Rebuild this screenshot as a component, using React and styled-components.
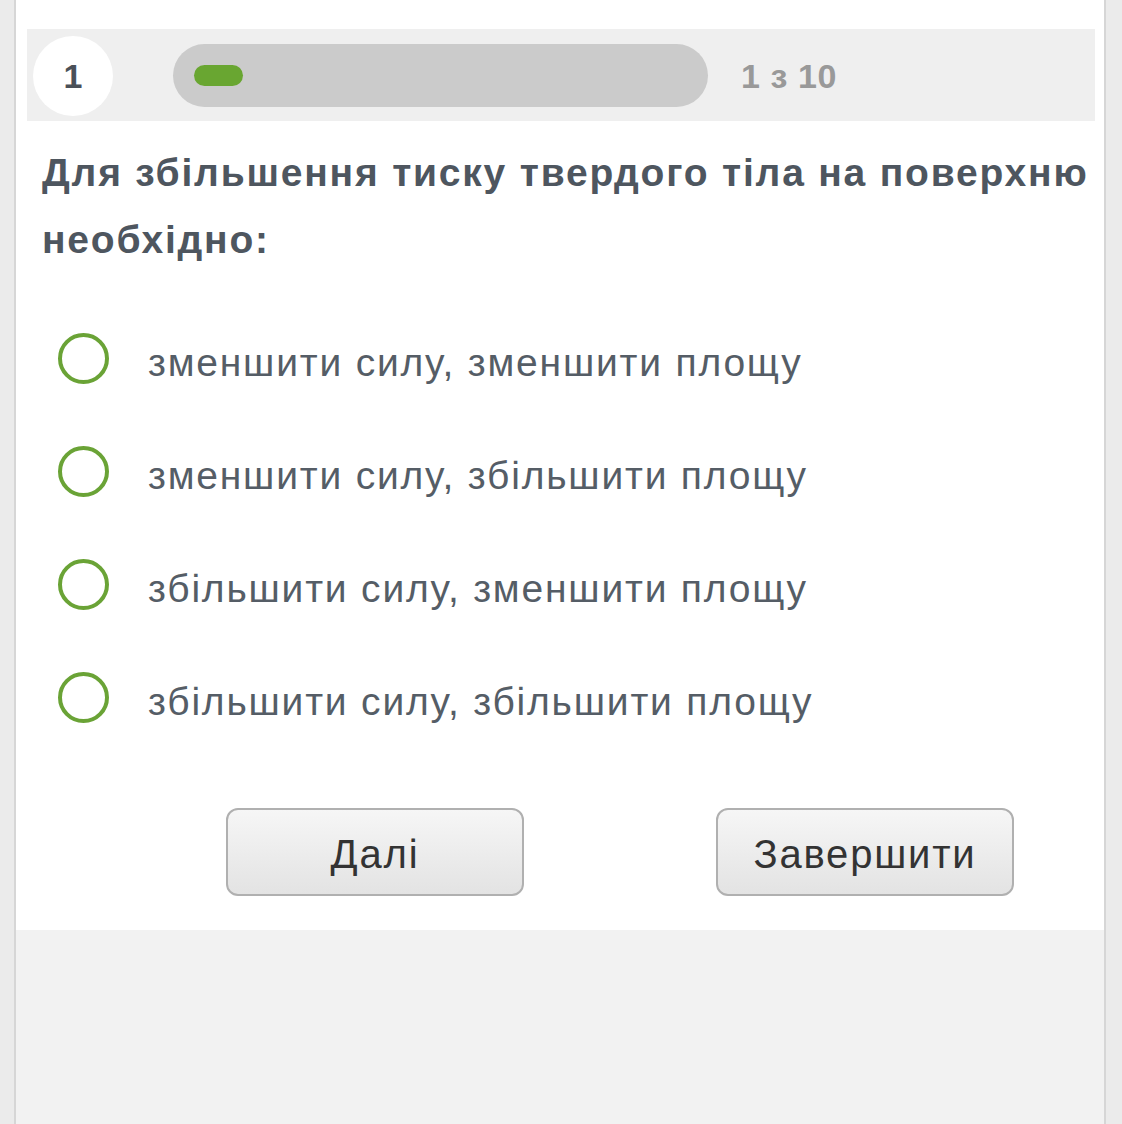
import React from 'react';
import styled, { createGlobalStyle } from 'styled-components';

const GlobalStyle = createGlobalStyle`
    html, body {
        margin: 0;
        padding: 0;
        background: #ececec;
    }
    * {
        box-sizing: border-box;
    }
`;

const Page = styled.div`
    display: flex;
    min-height: 1124px;
    font-family: "Liberation Sans", Arial, sans-serif;
`;
const Rail = styled.div`
    flex: 0 0 ${(p) => p.$width}px;
    background: #ebebeb;
    ${(p) => (p.$side === 'left' ? 'border-right' : 'border-left')}: 2px solid #d6d6d6;
`;
const Main = styled.main`
    flex: 1;
    display: flex;
    flex-direction: column;
    background: #f2f2f2;
`;
const Card = styled.section`
    background: #fff;
    padding: 29px 0 34px;
`;
const HeaderBar = styled.div`
    display: flex;
    align-items: center;
    height: 92px;
    margin: 0 9px 0 11px;
    padding: 0 6px;
    background: #efefef;
`;
const Number = styled.div`
    width: 80px;
    height: 80px;
    border-radius: 50%;
    background: #fff;
    display: flex;
    align-items: center;
    justify-content: center;
    font-size: 34px;
    font-weight: 700;
    color: #4a5058;
    margin-top: 2px;
`;
const Track = styled.div`
    width: 535px;
    height: 63px;
    margin-left: 60px;
    border-radius: 32px;
    background: #cbcbcb;
    display: flex;
    align-items: center;
    padding-left: 21px;
`;
const Fill = styled.div`
    width: 49px;
    height: 21px;
    border-radius: 11px;
    background: #69a631;
`;
const Counter = styled.div`
    margin: 3px 0 0 33px;
    font-size: 34px;
    font-weight: 700;
    letter-spacing: 0.6px;
    color: #999;
`;
const Question = styled.h2`
    margin: 18px 4px 0 26px;
    font-size: 39px;
    line-height: 67px;
    letter-spacing: 1.8px;
    font-weight: 700;
    color: #4e565f;
`;
const Options = styled.ul`
    list-style: none;
    margin: 29px 0 0;
    padding: 0 0 0 42px;
`;
const Option = styled.li`
    display: flex;
    align-items: center;
    height: 113px;
`;
const Radio = styled.span`
    width: 51px;
    height: 51px;
    border-radius: 50%;
    border: 4px solid #6aa336;
    flex-shrink: 0;
`;
const OptionText = styled.span`
    margin-left: 39px;
    padding-top: 8px;
    font-size: 39px;
    letter-spacing: 1.8px;
    color: #555d66;
`;
const Buttons = styled.div`
    display: flex;
    gap: 192px;
    margin-top: 54px;
    padding-left: 210px;
`;
const Button = styled.button`
    width: 298px;
    height: 88px;
    border: 2px solid #b0b0b0;
    border-radius: 12px;
    background: linear-gradient(#f6f6f6, #e3e3e3);
    font-family: inherit;
    font-size: 40px;
    letter-spacing: 1.8px;
    color: #333;
    padding: 4px 0 0;
`;
const Footer = styled.div`
    flex: 1;
    background: #f2f2f2;
`;

const answers = [
    'зменшити силу, зменшити площу',
    'зменшити силу, збільшити площу',
    'збільшити силу, зменшити площу',
    'збільшити силу, збільшити площу',
];

const App = () => {
    return (
        <Page>
            <GlobalStyle />
            <Rail $width={16} $side="left" />
            <Main>
                <Card>
                    <HeaderBar>
                        <Number>1</Number>
                        <Track>
                            <Fill />
                        </Track>
                        <Counter>1 з 10</Counter>
                    </HeaderBar>
                    <Question>
                        Для збільшення тиску твердого тіла на поверхню необхідно:
                    </Question>
                    <Options>
                        {answers.map((a) => (
                            <Option key={a}>
                                <Radio />
                                <OptionText>{a}</OptionText>
                            </Option>
                        ))}
                    </Options>
                    <Buttons>
                        <Button>Далі</Button>
                        <Button>Завершити</Button>
                    </Buttons>
                </Card>
                <Footer />
            </Main>
            <Rail $width={18} $side="right" />
        </Page>
    );
};

export default App;
